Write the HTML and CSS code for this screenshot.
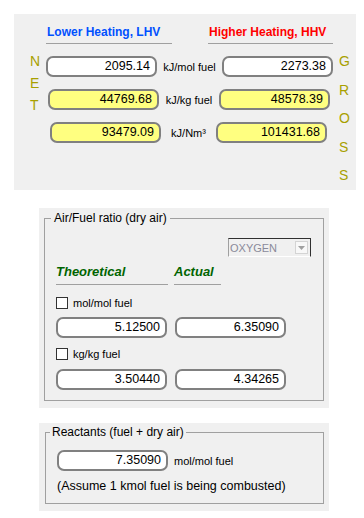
FILE: index.html
```html
<!DOCTYPE html>
<html lang="en">
<head>
    <meta charset="UTF-8">
    <title>Heating Values</title>
    <link rel="stylesheet" href="styles.css">
</head>
<body>
    <div class="heat">
        <div class="side net"><span>N</span><span>E</span><span>T</span></div>
        <div class="heat-main">
            <div class="heads">
                <div class="head lhv">Lower Heating, LHV</div>
                <div class="head hhv">Higher Heating, HHV</div>
            </div>
            <div class="hrow r1">
                <div class="val">2095.14</div>
                <div class="unit">kJ/mol fuel</div>
                <div class="val">2273.38</div>
            </div>
            <div class="hrow r2">
                <div class="val yel">44769.68</div>
                <div class="unit">kJ/kg fuel</div>
                <div class="val yel">48578.39</div>
            </div>
            <div class="hrow r3">
                <div class="val yel">93479.09</div>
                <div class="unit">kJ/Nm³</div>
                <div class="val yel">101431.68</div>
            </div>
        </div>
        <div class="side gross"><span>G</span><span>R</span><span>O</span><span>S</span><span>S</span></div>
    </div>

    <div class="panel air">
        <fieldset>
            <legend>Air/Fuel ratio (dry air)</legend>
            <div class="group-body">
                <div class="combo">
                    <span class="combo-text">OXYGEN</span>
                    <span class="combo-btn">
                        <svg width="7" height="4" viewBox="0 0 7 4"><path d="M0 0h7L3.5 4z" fill="#a0a0a0"/></svg>
                    </span>
                </div>
                <div class="aheads">
                    <div class="ahead theo">Theoretical</div>
                    <div class="ahead act">Actual</div>
                </div>
                <div class="check-row">
                    <span class="check"></span>
                    <span class="check-label">mol/mol fuel</span>
                </div>
                <div class="vrow">
                    <div class="val">5.12500</div>
                    <div class="val">6.35090</div>
                </div>
                <div class="check-row second">
                    <span class="check"></span>
                    <span class="check-label">kg/kg fuel</span>
                </div>
                <div class="vrow last">
                    <div class="val">3.50440</div>
                    <div class="val">4.34265</div>
                </div>
            </div>
        </fieldset>
    </div>

    <div class="panel react">
        <fieldset>
            <legend>Reactants (fuel + dry air)</legend>
            <div class="group-body">
                <div class="vrow single">
                    <div class="val">7.35090</div>
                    <div class="unit">mol/mol fuel</div>
                </div>
                <div class="note">(Assume 1 kmol fuel is being combusted)</div>
            </div>
        </fieldset>
    </div>
</body>
</html>
```

FILE: styles.css
```css
* {
    box-sizing: border-box;
}
body {
    margin: 0;
    background-color: #fff;
    font-family: "Liberation Sans", Arial, sans-serif;
    color: #000;
}

/* heating values block */
.heat {
    display: flex;
    margin: 14px 0 0 14px;
    width: 342px;
    height: 176px;
    background-color: #f0f0f0;
}
.side {
    display: flex;
    flex-direction: column;
    font-size: 14px;
    color: #a8a000;
}
.net {
    width: 32px;
    padding-left: 16px;
    padding-top: 36px;
    line-height: 22px;
}
.gross {
    margin-left: 6px;
    padding-top: 33px;
    line-height: 28.5px;
}
.heat-main {
    width: 287px;
    padding-top: 10px;
}
.heads {
    display: flex;
}
.head {
    font-size: 12px;
    font-weight: bold;
    line-height: 16px;
    padding: 0 0 3px 1px;
    border-bottom: 1px solid #a0a0a0;
}
.lhv {
    width: 126px;
    color: #0050ff;
}
.hhv {
    width: 125px;
    margin-left: 36px;
    color: #ff0000;
}
.hrow {
    display: flex;
    align-items: center;
    margin-top: 12px;
}
.val {
    width: 111px;
    height: 21px;
    border: 2px solid #808080;
    border-radius: 7px;
    background-color: #fff;
    text-align: right;
    padding-right: 5px;
    font-size: 12.5px;
    line-height: 17px;
}
.val.yel {
    background-color: #ffff80;
}
.unit {
    font-size: 11px;
    text-align: center;
}
.r1 .unit {
    width: 65px;
}
.r2 {
    margin-left: 2px;
}
.r2 .unit {
    width: 60px;
}
.r3 {
    margin-left: 4px;
}
.r3 .unit {
    width: 55px;
}

/* group panels */
.panel {
    width: 290px;
    margin-left: 39px;
    background-color: #f0f0f0;
}
.air {
    margin-top: 18px;
    padding: 3px 5px 7px 5px;
}
.react {
    margin-top: 15px;
    padding: 2px 5px 7px 6px;
}
fieldset {
    margin: 0;
    padding: 0;
    min-width: 0;
    border: 1px solid #a0a0a0;
}
legend {
    font-size: 12px;
    line-height: 15px;
    padding: 0 3px;
    margin-left: 6px;
}
.react legend {
    padding: 0 2px;
    margin-left: 4px;
}
.group-body {
    padding: 0 0 10px 11px;
}
.react .group-body {
    padding: 0 0 9px 11px;
}

.combo {
    display: flex;
    align-items: center;
    width: 83px;
    height: 19px;
    margin: 12px 12px 0 auto;
    border-top: 1px solid #303030;
    border-right: 1px solid #303030;
    border-left: 1px solid #a0a0a0;
    border-bottom: 1px solid #fff;
    background-color: #f0f0f0;
}
.combo-text {
    flex: 1;
    font-size: 11px;
    color: #8a8a9a;
    padding-left: 1px;
}
.combo-btn {
    display: flex;
    align-items: center;
    justify-content: center;
    width: 13px;
    height: 13px;
    margin-right: 2px;
    background-color: #f8f8f8;
    border: 1px solid #d4d4d4;
}

.aheads {
    display: flex;
    margin-top: 7px;
}
.ahead {
    font-size: 13px;
    font-weight: bold;
    font-style: italic;
    color: #006400;
    line-height: 16px;
    padding-bottom: 4px;
    border-bottom: 1px solid #a0a0a0;
}
.theo {
    width: 112px;
}
.act {
    width: 47px;
    margin-left: 6px;
}

.check-row {
    display: flex;
    align-items: center;
    height: 12px;
    margin-top: 12px;
}
.check-row.second {
    margin-top: 10px;
}
.check {
    width: 12px;
    height: 12px;
    border: 1px solid #333;
    background-color: #fff;
}
.check-label {
    font-size: 11px;
    margin-left: 5px;
}
.vrow {
    display: flex;
    align-items: center;
    gap: 8px;
    margin-top: 8px;
}
.vrow.last {
    margin-top: 9px;
}
.vrow.single {
    gap: 6px;
    margin-top: 10px;
}
.note {
    margin-top: 8px;
    font-size: 12.5px;
    line-height: 15px;
}
```
